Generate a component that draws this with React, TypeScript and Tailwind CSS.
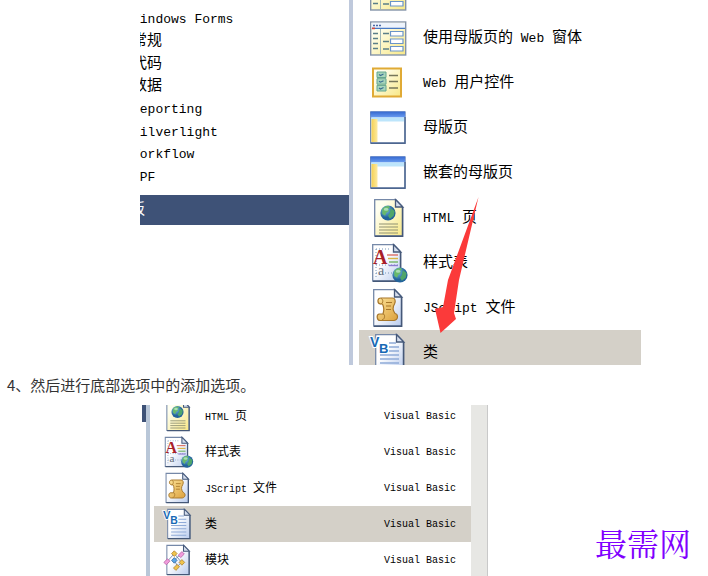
import type { ReactNode } from "react";

const cjk = "font-['Noto_Sans_CJK_SC',sans-serif]";
const song = "font-['Noto_Serif_CJK_SC','Noto_Sans_CJK_SC',serif]";
const mono = "font-['Liberation_Mono','Noto_Sans_CJK_SC',monospace]";

type IconName = "form" | "control" | "master" | "html" | "css" | "script" | "vb" | "module";

function Sheet({ x = 4, fill = "url(#paper)" }: { x?: number; fill?: string }) {
  return (
    <g transform={`translate(${x} 0)`}>
      <path d="M0.7 1.7H22L28.5 8.5V38H0.7Z" fill={fill} stroke="#7588a8" strokeWidth="1.3" />
      <path d="M28.6 9V38.2H1" fill="none" stroke="#455878" strokeWidth="1.5" />
      <path d="M21.5 1.5V9H28.8Z" fill="#d5deee" stroke="#46597a" strokeWidth="1.3" />
    </g>
  );
}

function Globe({ cx, cy, r }: { cx: number; cy: number; r: number }) {
  return (
    <g transform={`translate(${cx} ${cy}) scale(${r / 8})`}>
      <circle r="8" fill="url(#sea)" />
      <path d="M-6-4C-3-8 1-8 2-6L0-4 1-2-2 0-3 3-6 1Z" fill="#69b96b" />
      <path d="M3-5 7-2 6 3 2 6 0 3 2 0Z" fill="#4fa66a" />
      <ellipse cx="-2" cy="-4" rx="2.4" ry="1.6" fill="#d5f5e4" opacity=".6" />
    </g>
  );
}

const drawings: Record<IconName, ReactNode> = {
  form: (
    <>
      <rect x=".7" y="4" width="35" height="33" fill="url(#cream)" stroke="#8493a8" strokeWidth="1.4" />
      <path d="M1.5 4.8H35V10H1.5Z" fill="#edf3fc" />
      <path d="M3 7.5H12" stroke="#4d6aa5" strokeWidth="1.6" strokeDasharray="2 1" />
      <path d="M2 10.4H35" stroke="#4779c4" strokeWidth="1.4" />
      <path d="M2 10.4H5" stroke="#d9463a" strokeWidth="1.6" />
      <path d="M10.5 11V36" stroke="#9fb6b8" />
      <path d="M3 15.5H8M3 20.5H8M3 25.5H8M3 30.5H8M13 15.5H19M13 23.5H19M13 31H19" stroke="#5b7f88" strokeWidth="1.4" />
      <path d="M20.5 13.5H33V18H20.5ZM20.5 21H33V25.5H20.5ZM20.5 28.5H33V33H20.5Z" fill="#fff" stroke="#6a95c9" strokeWidth="1.2" />
    </>
  ),
  control: (
    <>
      <rect x="3" y="5.5" width="28" height="28" fill="url(#cream)" stroke="#e0aa35" strokeWidth="2" />
      <path d="M7 9H16V14.5H7ZM7 15.7H16V21.2H7ZM7 22.4H16V28H7Z" fill="#a7d5bc" stroke="#65a68e" />
      <path d="M9 11.5 10.5 12.5 13.5 11M9 18.2 10.5 19.2 13.5 17.7M9 25 10.5 26 13.5 24.5" fill="none" stroke="#386c91" strokeWidth="1.1" />
      <path d="M19 12.5H28M19 18.5H28M19 25H28" stroke="#77775b" strokeWidth="1.3" />
    </>
  ),
  master: (
    <>
      <rect x=".7" y="4" width="34.3" height="31" fill="#fff" stroke="#6580ac" strokeWidth="1.2" />
      <rect x=".5" y="3.5" width="34.7" height="6" fill="url(#title)" />
      <rect x="1.3" y="9.5" width="33.2" height="4" fill="#bde5fb" />
      <rect x="1.5" y="11" width="6" height="23" fill="url(#side)" />
      <path d="M.7 35.3H35V9" fill="none" stroke="#4d668f" strokeWidth="1.4" />
    </>
  ),
  html: (
    <>
      <Sheet fill="url(#cream)" />
      <Globe cx={18} cy={15} r={7.6} />
      <path d="M9 26H28M9 29H28M9 32H28M9 35H28" stroke="#8f9272" strokeWidth="1.1" />
    </>
  ),
  css: (
    <>
      <Sheet x={2} />
      <path d="M6 6H21M6 6V34M6 22H28M6 30H23" stroke="#7796b9" strokeDasharray="1 2" fill="none" />
      <path d="M17 12H28" stroke="#dd6f65" strokeWidth="1.4" />
      <path d="M18 15.5H28" stroke="#d8b443" strokeWidth="1.4" />
      <path d="M19 19H28" stroke="#73b464" strokeWidth="1.4" />
      <path d="M19 22.5H28" stroke="#8c7bd0" strokeWidth="1.4" />
      <text x="3" y="21" fontSize="20" fontWeight="700" fill="#a92028" fontFamily="Liberation Serif, serif">A</text>
      <text x="8" y="32" fontSize="14" fill="#68717e" fontFamily="Liberation Serif, serif">a</text>
      <Globe cx={30} cy={32} r={7.6} />
    </>
  ),
  script: (
    <>
      <Sheet x={3} />
      <path
        d="M11 10C7 10 7 15.500 10.500 16H12.500C14 19 14 23 13 26H9C6 27 7 32.500 10 32.500H24C29 31.500 28 26 25 25.500 22.500 22 22.500 19 24.500 16 26 13 25 10 22.500 10Z"
        fill="url(#gold)" stroke="#a7772b" strokeWidth="1.2"
      />
      <path d="M11 10.500C13.500 11 13.500 15.500 10.500 16M13 26C15.500 26 15 31.500 12 32M16 14.500H22M16 18H21M16 21.500H21" fill="none" stroke="#a7772b" />
    </>
  ),
  vb: (
    <>
      <Sheet x={5} />
      <path d="M19 10H26M19 14H29M19 18H29M10 22H29M10 26H29M10 30H29M10 34H29" stroke="#8faad8" strokeWidth="1.3" />
      <g fontFamily="Liberation Sans, sans-serif" fontWeight="700" fill="#1769b5" stroke="#fff" strokeWidth="2" paintOrder="stroke">
        <text x="0" y="14" fontSize="14">V</text>
        <text x="9" y="20" fontSize="13">B</text>
      </g>
    </>
  ),
  module: (
    <>
      <Sheet />
      <path d="M5 22 14 12 23 23 17 29M14 20 22 13M14 20 18 28" fill="none" stroke="#657ca4" />
      <g strokeWidth="1">
        <path d="M10.500 12 14 8.500 17.500 12 14 15.500Z" fill="#efc44c" stroke="#ae8133" />
        <path d="M19 14 23.500 9.500 26.500 12.500 22 17Z" fill="#f09bdb" stroke="#b662a6" />
        <path d="M1 23 5.500 18.500 8.500 21.500 4 26Z" fill="#f09bdb" stroke="#b662a6" />
        <path d="M10.500 20.500 14 17 17.500 20.500 14 24Z" fill="#5aa6e5" stroke="#3569a5" />
        <path d="M20 23 23.500 19.500 27 23 23.500 26.500Z" fill="#efc44c" stroke="#ae8133" />
        <path d="M13 30 17.500 25.500 20.500 28.500 16 33Z" fill="#efc44c" stroke="#ae8133" />
      </g>
    </>
  ),
};

function Icon({ name, className }: { name: IconName; className: string }) {
  return (
    <svg viewBox="0 0 36 40" className={`shrink-0 overflow-visible ${className}`} aria-hidden="true">
      {drawings[name]}
    </svg>
  );
}

function IconPaints() {
  return (
    <svg width="0" height="0" className="absolute" aria-hidden="true">
      <defs>
        <linearGradient id="paper" x2="1" y2="1">
          <stop offset=".4" stopColor="#fff" />
          <stop offset="1" stopColor="#b9cbed" />
        </linearGradient>
        <linearGradient id="cream" x2="1" y2="1">
          <stop offset=".2" stopColor="#fffff0" />
          <stop offset="1" stopColor="#f8e885" />
        </linearGradient>
        <linearGradient id="title" x2="0" y2="1">
          <stop stopColor="#3568cf" />
          <stop offset="1" stopColor="#6b9df1" />
        </linearGradient>
        <linearGradient id="side" x2="1">
          <stop stopColor="#f5d154" />
          <stop offset="1" stopColor="#fdeaa0" />
        </linearGradient>
        <linearGradient id="gold" x2="1" y2="1">
          <stop stopColor="#fbe198" />
          <stop offset="1" stopColor="#dca13c" />
        </linearGradient>
        <radialGradient id="sea" cx=".35" cy=".3">
          <stop stopColor="#7cc5e3" />
          <stop offset="1" stopColor="#23639b" />
        </radialGradient>
      </defs>
    </svg>
  );
}

/* Latin runs are set smaller than the Chinese ones so both keep the dialog's character grid. */
function Label({ text, latin }: { text: string; latin: string }) {
  return (
    <span className="whitespace-pre">
      {text.split(/([\x20-\x7e]+)/).map((part, i) =>
        i % 2 ? <span key={i} className={latin}>{part}</span> : part
      )}
    </span>
  );
}

const categories = ["Web", "Windows Forms", "常规", "代码", "数据", "Reporting", "Silverlight", "Workflow", "WPF"];

const templates: { icon: IconName; name: string }[] = [
  { icon: "form", name: "Web 窗体" },
  { icon: "form", name: "使用母版页的 Web 窗体" },
  { icon: "control", name: "Web 用户控件" },
  { icon: "master", name: "母版页" },
  { icon: "master", name: "嵌套的母版页" },
  { icon: "html", name: "HTML 页" },
  { icon: "css", name: "样式表" },
  { icon: "script", name: "JScript 文件" },
  { icon: "vb", name: "类" },
];

const results: { icon: IconName; name: string }[] = [
  ...templates.slice(5),
  { icon: "module", name: "模块" },
];

function TemplateDialog() {
  return (
    <figure className={`relative ml-[140px] flex h-[365px] max-w-[501px] overflow-hidden text-[15px] text-black ${mono}`}>
      <nav className="w-[209px] shrink-0 overflow-hidden">
        <ul className="-mt-3.5 -ml-2 grid h-[203px] grid-rows-9">
          {categories.map((name) => (
            <li key={name} className="flex items-center">
              <button className="leading-5">
                <Label text={name} latin="text-[13px]" />
              </button>
            </li>
          ))}
        </ul>
        <button className="mt-1.5 flex h-[30px] w-full items-center bg-[#3e5277] pt-0.5 text-white">
          <span className="-ml-[55px]">联机模板</span>
        </button>
      </nav>
      <div className="w-1 shrink-0 bg-[#bfc9dc]" />
      <ul className="-mt-[30px] ml-1.5 min-w-0 grow">
        {templates.map(({ icon, name }) => (
          <li key={name}>
            <button
              className={`flex h-[45px] w-full items-center gap-[17px] pl-[11px] ${name === "类" ? "bg-[#d4d0c8]" : ""}`}
            >
              <Icon name={icon} className="h-10 w-9" />
              <span className="pt-1">
                <Label text={name} latin="text-[13px]" />
              </span>
            </button>
          </li>
        ))}
      </ul>
      <svg viewBox="0 0 44 136" className="absolute top-[197px] left-[295px] h-[136px] w-11" aria-hidden="true">
        <path d="M43.500 0L24 83 19 116 21 122 5.500 136 0 112 8 110 13 83Z" fill="#fb3a3a" />
      </svg>
    </figure>
  );
}

function ResultDialog() {
  return (
    <figure className={`ml-[142px] flex h-[171px] max-w-[346px] overflow-hidden text-xs text-black ${mono}`}>
      <div className="h-[17px] w-1 shrink-0 bg-[#3e5277]" />
      <div className="w-1 shrink-0 bg-[#b9c7d8]" />
      <ul className="-mt-[7px] ml-1 min-w-0 grow">
        {results.map(({ icon, name }) => (
          <li key={name}>
            <button
              className={`flex h-9 w-full items-center gap-[13px] pr-[15px] pl-[9px] ${name === "类" ? "bg-[#d4d0c8]" : ""}`}
            >
              <Icon name={icon} className="h-8 w-[29px]" />
              <span className="flex grow items-center justify-between pt-0.5">
                <Label text={name} latin="text-[10px]" />
                <span className="text-[10px]">Visual Basic</span>
              </span>
            </button>
          </li>
        ))}
      </ul>
      <div className="w-[17px] shrink-0 border-r border-[#c9c9c9] bg-[#e7e7e4]" />
    </figure>
  );
}

export default function App() {
  return (
    <main className="relative overflow-hidden bg-white">
      <IconPaints />
      <TemplateDialog />
      <p className={`pl-[7px] text-[15px] leading-10 text-[#333] ${cjk}`}>4、然后进行底部选项中的添加选项。</p>
      <ResultDialog />
      <div className={`absolute right-[17px] bottom-2.5 text-[32px] leading-[48px] text-[#8000ff] ${song}`}>最需网</div>
    </main>
  );
}
